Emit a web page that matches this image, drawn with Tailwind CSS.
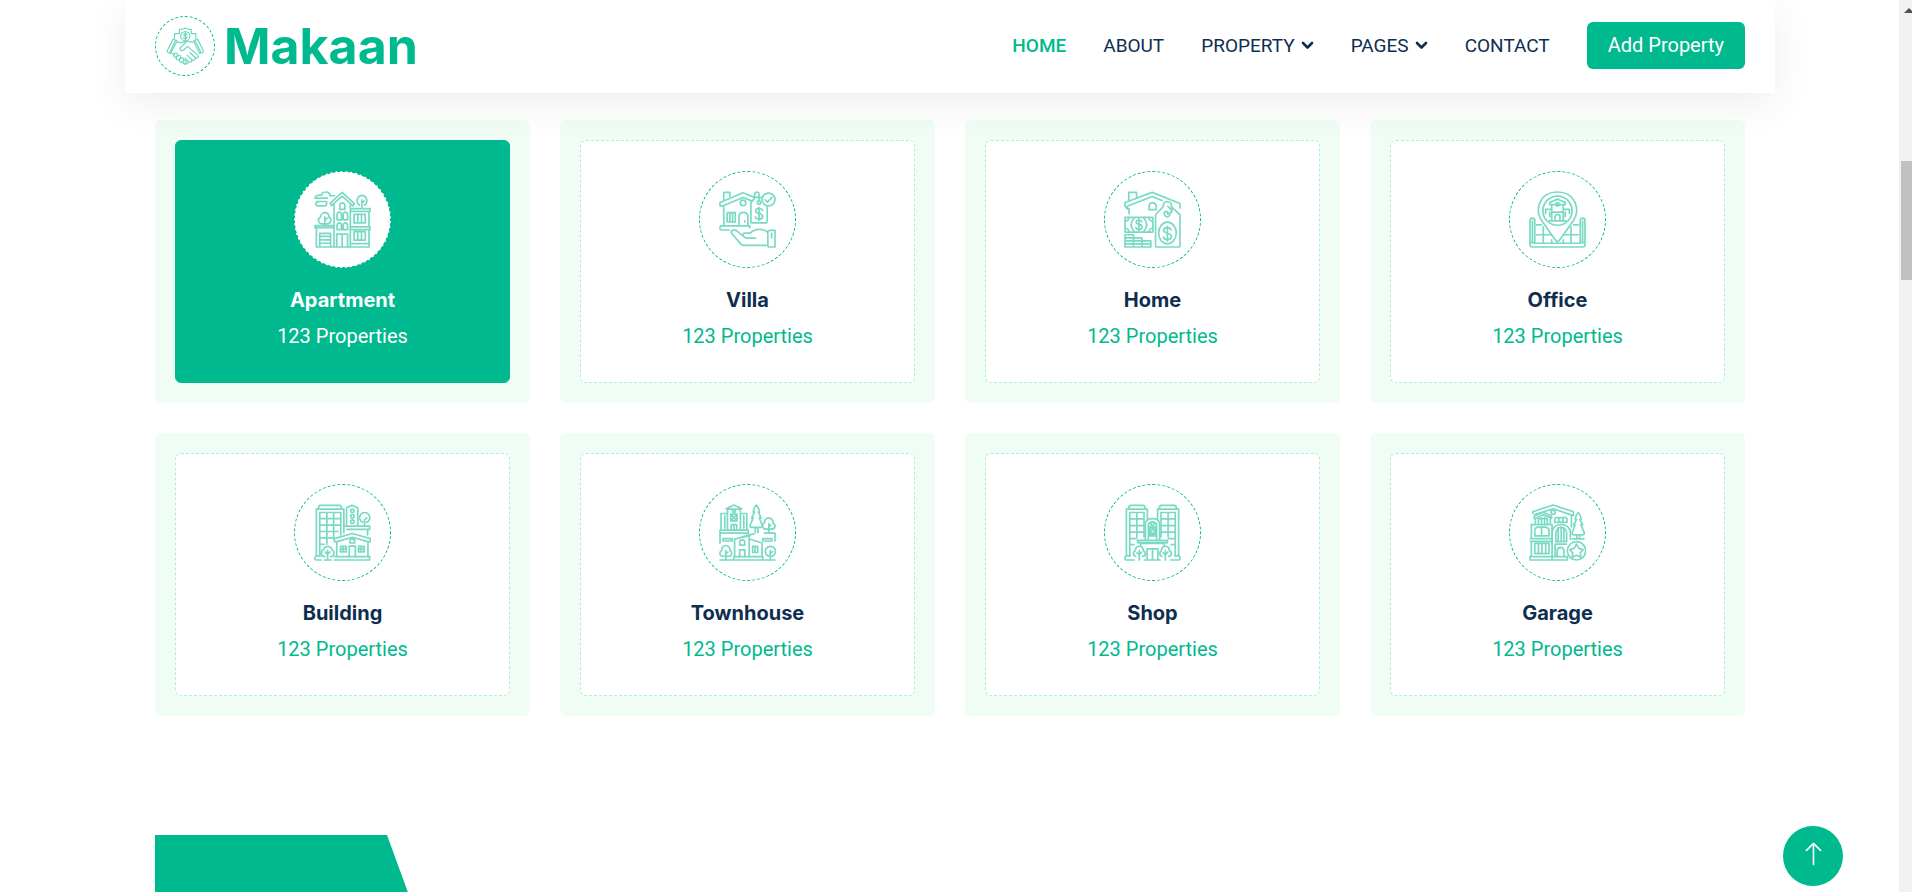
<!DOCTYPE html>
<html lang="en">
<head>
<meta charset="utf-8">
<meta name="viewport" content="width=device-width, initial-scale=1">
<title>Makaan</title>
<script src="https://cdn.jsdelivr.net/npm/@tailwindcss/browser@4"></script>
</head>
<body class="flex h-screen overflow-hidden bg-white font-['Roboto',sans-serif] text-xl text-[#0E2E50]">
<div class="h-screen min-w-0 flex-1 overflow-hidden">
  <header class="relative z-10 mx-auto flex h-[93px] max-w-[1650px] items-center justify-between bg-white px-[30px] pb-[2px] shadow-[0_10px_40px_rgba(0,0,0,0.07)]">
    <a href="#" class="flex items-center gap-[9px] text-[#00B98E]">
      <span class="flex size-[60px] items-center justify-center rounded-full border border-dashed border-[#00B98E]">
        <svg class="size-[38px]" viewBox="166 80 114 116" fill="none" stroke="#6FD6BE" stroke-width="3.6" stroke-linecap="round" stroke-linejoin="round" aria-hidden="true">
          <path d="M191 114V100H206V88C213 88 219 86 224 83C229 86 235 88 242 88V100H256V114"/>
          <circle cx="224" cy="108" r="14"/>
          <path d="M229 103C226 99 219 100 219 104C219 109 229 107 229 112C229 116 221 117 218 113M224 98V118"/>
          <path d="M187 117L169 152Q168 157 172 158L179 161L199 123ZM261 117L279 152Q280 157 275 158L268 161L249 123ZM195 120L177 156M253 120L271 156"/>
          <path d="M201 126C210 130 217 126 226 124C234 121 239 127 247 126M226 126L208 144C206 150 212 154 218 151L231 139L262 166C267 172 260 178 254 173L238 158M254 173C257 180 249 185 243 179L230 166M243 179C246 187 237 190 232 184L223 175M232 184C234 194 225 196 219 190M183 160L190 165"/>
          <path d="M189 170C185 164 194 156 199 162C203 167 193 177 189 170ZM197 179C193 172 204 162 209 168C213 174 202 185 197 179ZM207 186C203 180 213 170 218 176C222 181 212 193 207 186ZM217 191C213 187 221 178 226 183C229 188 221 196 217 191Z"/>
        </svg>
      </span>
      <span class="font-['Inter',sans-serif] text-[50px] leading-[60px] font-bold">Makaan</span>
    </a>
    <nav class="flex items-center gap-[37px] text-[19px] leading-7" aria-label="Main">
      <a href="#" class="font-medium text-[#00B98E]">HOME</a>
      <a href="#">ABOUT</a>
      <a href="#" class="flex items-center gap-[6px]">PROPERTY
        <svg class="h-[9px] w-[13px]" viewBox="0 0 13 9" fill="none" stroke="currentColor" stroke-width="2.6" stroke-linecap="round" stroke-linejoin="round" aria-hidden="true"><path d="M2 2L6.5 6.5L11 2"/></svg></a>
      <a href="#" class="flex items-center gap-[6px]">PAGES
        <svg class="h-[9px] w-[13px]" viewBox="0 0 13 9" fill="none" stroke="currentColor" stroke-width="2.6" stroke-linecap="round" stroke-linejoin="round" aria-hidden="true"><path d="M2 2L6.5 6.5L11 2"/></svg></a>
      <a href="#">CONTACT</a>
      <button type="button" class="rounded-md bg-[#00B98E] px-[21px] pt-[8px] pb-[9px] text-xl leading-[30px] text-white">Add Property</button>
    </nav>
  </header>

  <main class="mx-auto max-w-[1650px] px-[30px] pt-[27px]">
    <section class="grid grid-cols-4 gap-[30px] text-center" aria-label="Property types">
      <a href="#" class="rounded-md bg-[#EFFDF5] p-5">
        <span class="flex flex-col items-center rounded-md border border-[#00B98E] bg-[#00B98E] p-[30px] pb-[31px] text-white">
          <span class="mb-5 flex size-[97px] items-center justify-center rounded-full border border-dashed border-[#00B98E] bg-white">
            <svg class="size-[57px]" viewBox="87 93 168 168" fill="none" stroke="#79DAC4" stroke-width="5" stroke-linecap="round" stroke-linejoin="round" aria-hidden="true">
              <path d="M148 107H134C135 101 129 95 121 96C114 96 110 100 109 106C101 104 91 106 90 114H126M95 124H124M104 124C91 124 89 136 98 137H120Q126 135 124 127"/>
              <path d="M138 136L135 129L170 97L206 130L202 137L170 108ZM146 134V257M194 134V257M90 195H144V201H90ZM94 202V257M104 218H136V257M104 218V257M104 227H136M104 237H136M104 247H136M94 258H249V248H197"/>
              <path d="M163 147V136Q163 128 170 128Q178 128 178 136V147ZM155 178V164Q155 155 162 155Q168 155 168 164V178ZM173 178V164Q173 155 180 155Q186 155 186 164V178ZM155 207V195Q155 187 162 187Q168 187 168 195V207ZM173 207V195Q173 187 180 187Q186 187 186 195V207ZM154 257V220H186V257M170 220V257"/>
              <path d="M112 190C98 190 97 173 106 171C106 154 132 151 131 170C140 174 138 190 126 190H112M119 169V192M119 179L126 173"/>
              <path d="M228 106A16 16 0 0 0 221 135M228 106A16 16 0 0 1 236 135M228 120V143M228 130L235 122"/>
              <path d="M196 145H252V153H196M249 154V197M196 199H252V207H196M249 208V247M205 162H238V187H205ZM216 162V187M227 162V187M205 213H238V238H205ZM216 213V238M227 213V238"/>
            </svg>
          </span>
          <span class="mb-[9px] font-['Inter',sans-serif] leading-6 font-bold">Apartment</span>
          <span class="leading-[30px]">123 Properties</span>
        </span>
      </a>
      <a href="#" class="rounded-md bg-[#EFFDF5] p-5">
        <span class="flex flex-col items-center rounded-md border border-dashed border-[#00B98E]/30 bg-white p-[30px] pb-[31px]">
          <span class="mb-5 flex size-[97px] items-center justify-center rounded-full border border-dashed border-[#00B98E]">
            <svg class="size-[57px]" viewBox="87 93 168 168" fill="none" stroke="#79DAC4" stroke-width="5" stroke-linecap="round" stroke-linejoin="round" aria-hidden="true">
              <path d="M101 117V97H119V109M90 127L158 98L192 112V104Q193 96 199 96Q205 97 205 104V124M90 127V137H98L158 112L183 122M101 139V194M92 196H178V201M92 196Q86 207 94 208H118"/>
              <path d="M181 186V128L193 112H212M229 140V182Q229 187 224 187H186Q181 187 181 182"/>
              <circle cx="158" cy="128" r="8"/><circle cx="205" cy="127" r="5"/>
              <circle cx="233" cy="118" r="19"/><path d="M223 119L230 126L243 111"/>
              <path d="M111 157H135V184H111ZM119 157V184M127 157V184M146 195V167Q147 156 159 156Q171 156 172 167V195M163 181V184"/>
              <path d="M216 150C212 141 195 142 195 152C195 163 216 156 216 168C216 178 198 179 194 169M205 141V179"/>
              <path d="M230 215C219 203 193 202 179 217H163C157 217 155 224 161 228L168 232H195M161 228L139 210C129 204 120 211 125 219L151 249Q154 253 160 253H231M231 213Q231 209 236 209H252V258H236Q231 258 231 253ZM242 217V231"/>
            </svg>
          </span>
          <span class="mb-[9px] font-['Inter',sans-serif] leading-6 font-bold">Villa</span>
          <span class="leading-[30px] text-[#00B98E]">123 Properties</span>
        </span>
      </a>
      <a href="#" class="rounded-md bg-[#EFFDF5] p-5">
        <span class="flex flex-col items-center rounded-md border border-dashed border-[#00B98E]/30 bg-white p-[30px] pb-[31px]">
          <span class="mb-5 flex size-[97px] items-center justify-center rounded-full border border-dashed border-[#00B98E]">
            <svg class="size-[57px]" viewBox="87 93 168 168" fill="none" stroke="#79DAC4" stroke-width="5" stroke-linecap="round" stroke-linejoin="round" aria-hidden="true">
              <path d="M101 121V97H124V111M90 127L170 97L252 130V143M90 127V138L97 146V138L170 109L199 121M102 145V160"/>
              <path d="M161 148V138Q162 127 171 127Q181 128 182 138V148Z"/>
              <path d="M90 171H172V214H90ZM90 183Q100 182 102 171M90 202Q100 203 102 214M172 183Q162 182 160 171M172 202Q162 203 160 214M116 174Q100 192 116 211M146 174Q162 192 146 211"/>
              <path d="M139 184C136 176 123 177 123 185C123 194 140 189 140 199C140 208 125 209 122 201M131 175V210"/>
              <path d="M90 222H115V258H90ZM90 231H115M90 240H166V258H90M90 249H166M115 231H140V258"/>
              <path d="M203 139L180 163V253Q180 258 185 258H247Q252 258 252 253V163L230 143M203 139V133Q205 124 215 124Q227 125 227 136V155Q225 161 215 158M222 164C216 174 204 167 206 157C209 150 218 154 216 161M216 138L229 151"/>
              <ellipse cx="215" cy="217" rx="26" ry="32"/>
              <path d="M226 208C222 198 204 199 204 209C204 221 227 214 227 227C227 238 207 240 203 229M215 197V240"/>
            </svg>
          </span>
          <span class="mb-[9px] font-['Inter',sans-serif] leading-6 font-bold">Home</span>
          <span class="leading-[30px] text-[#00B98E]">123 Properties</span>
        </span>
      </a>
      <a href="#" class="rounded-md bg-[#EFFDF5] p-5">
        <span class="flex flex-col items-center rounded-md border border-dashed border-[#00B98E]/30 bg-white p-[30px] pb-[31px]">
          <span class="mb-5 flex size-[97px] items-center justify-center rounded-full border border-dashed border-[#00B98E]">
            <svg class="size-[57px]" viewBox="87 93 168 168" fill="none" stroke="#79DAC4" stroke-width="5" stroke-linecap="round" stroke-linejoin="round" aria-hidden="true">
              <path d="M171 242Q166 241 163 235L124 180C104 149 116 96 171 96C226 96 238 149 218 180L179 235Q176 241 171 242Z"/>
              <circle cx="171" cy="151" r="43"/>
              <path d="M148 133V127L171 117L194 127V133H148M154 134V181M188 134V181M146 181H196M154 147H136V159M188 147H206V159M148 155V168M194 155V168M164 181V169Q165 162 171 162Q178 163 178 169V181M154 155H188"/>
              <circle cx="171" cy="132" r="5"/>
              <path d="M104 187V179Q103 173 97 173Q90 174 90 180V251Q90 258 97 258H245Q252 258 252 251V180Q252 173 245 173Q238 174 238 180V187M97 182V245M245 182V245M104 187V245H91M238 187V245H251M104 247H238"/>
              <path d="M109 193H123M109 222H153M129 199V247M154 237V247M219 193H232M190 222H232M211 199V247M188 237V247"/>
            </svg>
          </span>
          <span class="mb-[9px] font-['Inter',sans-serif] leading-6 font-bold">Office</span>
          <span class="leading-[30px] text-[#00B98E]">123 Properties</span>
        </span>
      </a>
      <a href="#" class="rounded-md bg-[#EFFDF5] p-5">
        <span class="flex flex-col items-center rounded-md border border-dashed border-[#00B98E]/30 bg-white p-[30px] pb-[31px]">
          <span class="mb-5 flex size-[97px] items-center justify-center rounded-full border border-dashed border-[#00B98E]">
            <svg class="size-[57px]" viewBox="87 93 168 168" fill="none" stroke="#79DAC4" stroke-width="5" stroke-linecap="round" stroke-linejoin="round" aria-hidden="true">
              <path d="M100 107Q100 97 106 97H162Q168 97 169 107M94 246V108H175V178M104 246V118H166V184M125 118V212M145 118V196M104 136H166M104 155H166M104 174H158M104 193H144M104 212H116M106 246H92Q86 258 95 258H108"/>
              <path d="M183 155V104L199 97L216 104V155M175 158H251V168H184M245 169V184M236 140V157M236 140L242 134"/>
              <circle cx="200" cy="113" r="5"/><circle cx="200" cy="129" r="5"/><circle cx="200" cy="145" r="5"/>
              <path d="M231 147A15 15 0 1 1 242 147"/>
              <path d="M147 195L200 180L253 195V204H245L200 191L155 204H147ZM154 205V246M246 205V246M147 248H251V258H147M118 258H137"/>
              <path d="M193 208V202Q194 196 200 196Q207 197 207 202V208ZM165 218H182V234H165ZM173 218V234M165 226H182M218 218H235V234H218ZM226 218V234M218 226H235M191 248V217H209V248"/>
              <path d="M119 248C106 249 106 231 115 228C117 215 138 215 140 228C149 233 147 249 136 248M127 230V258M127 241L134 234M120 235L127 242"/>
            </svg>
          </span>
          <span class="mb-[9px] font-['Inter',sans-serif] leading-6 font-bold">Building</span>
          <span class="leading-[30px] text-[#00B98E]">123 Properties</span>
        </span>
      </a>
      <a href="#" class="rounded-md bg-[#EFFDF5] p-5">
        <span class="flex flex-col items-center rounded-md border border-dashed border-[#00B98E]/30 bg-white p-[30px] pb-[31px]">
          <span class="mb-5 flex size-[97px] items-center justify-center rounded-full border border-dashed border-[#00B98E]">
            <svg class="size-[57px]" viewBox="87 93 168 168" fill="none" stroke="#79DAC4" stroke-width="5" stroke-linecap="round" stroke-linejoin="round" aria-hidden="true">
              <path d="M108 107L131 96L154 107M112 108H150V167M112 108V167M93 167V121H111M151 121H169V167M90 170H173V179H90ZM90 180V208M104 127V164M160 127V164M123 167V154H139V167M131 154V167"/>
              <circle cx="131" cy="114" r="4"/><path d="M122 123H140V143H122ZM122 123L140 143M140 123L122 143"/>
              <path d="M197 96Q189 104 188 117H192L183 134H188L178 157Q178 162 184 162H210Q216 162 215 157L206 134H211L203 117H206Q205 104 197 96ZM194 163V177M202 163V177"/>
              <path d="M225 167C211 167 213 151 221 149C219 130 248 130 246 149C256 154 253 167 242 167H225M234 151V177M234 160L240 155M221 179H252V202"/>
              <path d="M99 195H126V202H99ZM216 195H243V202H216ZM133 248V197L176 184L190 181M176 188V248M176 196L214 208V248M134 196L178 186M131 248H216V258H131ZM90 258H128M219 258H252"/>
              <path d="M148 214V204Q149 199 156 199Q163 200 163 206V214ZM148 248V228H163V248M186 218H201V236H186ZM193 218V236"/>
              <path d="M97 247C87 245 88 233 95 230C93 211 121 210 119 230C127 234 126 247 116 247H97M107 230V258M107 240L113 235"/>
              <path d="M234 247A15 15 0 1 1 243 247M238 230V258M238 240L245 233"/>
            </svg>
          </span>
          <span class="mb-[9px] font-['Inter',sans-serif] leading-6 font-bold">Townhouse</span>
          <span class="leading-[30px] text-[#00B98E]">123 Properties</span>
        </span>
      </a>
      <a href="#" class="rounded-md bg-[#EFFDF5] p-5">
        <span class="flex flex-col items-center rounded-md border border-dashed border-[#00B98E]/30 bg-white p-[30px] pb-[31px]">
          <span class="mb-5 flex size-[97px] items-center justify-center rounded-full border border-dashed border-[#00B98E]">
            <svg class="size-[57px]" viewBox="87 93 168 168" fill="none" stroke="#79DAC4" stroke-width="5" stroke-linecap="round" stroke-linejoin="round" aria-hidden="true">
              <path d="M101 107Q101 97 107 97H143Q149 97 150 107M94 246V108H156V140M104 246V118H146V190M125 118V190M104 137H146M104 157H146M104 176H146M104 195H124M104 213H116M106 246H92Q86 258 95 258H117"/>
              <path d="M191 107Q191 97 197 97H235Q241 97 242 107M248 246V108H186V140M238 246V118H196V190M217 118V190M196 137H238M196 157H238M196 176H238M218 195H238M226 213H238M236 246H250Q256 258 247 258H225"/>
              <path d="M150 197V151C153 131 189 131 192 151V197M159 197V153C162 144 180 144 183 153V197"/>
              <circle cx="171" cy="151" r="5"/><path d="M163 161H179V187H163ZM163 161L179 174L163 187M179 161L163 174L179 187"/>
              <path d="M127 200H215V207H127ZM136 208V214M206 208V214M136 209H206M155 258V225H187V258M171 225V258M147 258H194"/>
              <path d="M121 247C111 244 115 232 120 231C121 213 143 213 144 231C153 235 151 247 142 247M132 230V258M132 242L139 235M125 237L132 243M198 247C190 244 192 232 197 231C198 213 220 213 221 231C230 235 228 247 219 247M209 230V258M209 242L216 235M202 237L209 243"/>
            </svg>
          </span>
          <span class="mb-[9px] font-['Inter',sans-serif] leading-6 font-bold">Shop</span>
          <span class="leading-[30px] text-[#00B98E]">123 Properties</span>
        </span>
      </a>
      <a href="#" class="rounded-md bg-[#EFFDF5] p-5">
        <span class="flex flex-col items-center rounded-md border border-dashed border-[#00B98E]/30 bg-white p-[30px] pb-[31px]">
          <span class="mb-5 flex size-[97px] items-center justify-center rounded-full border border-dashed border-[#00B98E]">
            <svg class="size-[57px]" viewBox="87 93 168 168" fill="none" stroke="#79DAC4" stroke-width="5" stroke-linecap="round" stroke-linejoin="round" aria-hidden="true">
              <path d="M98 121V116L158 96L218 116V127L211 125L158 107L104 124M102 133V129L128 117L154 129V135L128 125L103 137ZM106 137V151M150 137V151M212 128V160"/>
              <circle cx="158" cy="117" r="6"/>
              <path d="M115 151V136H141V151M124 134V151M133 134V151M163 147V137Q163 133 168 133H194Q199 133 199 137V147ZM175 133V147M187 133V147"/>
              <path d="M93 154H155M94 154V195M91 195H155V203H91M94 204V246M104 187V171Q105 161 115 161H135Q145 162 146 171V187ZM124 161V187M104 209H146V239H104ZM115 209V239M125 209V239M136 209V239M90 248H155V258H90ZM155 154V258"/>
              <path d="M155 210V176C157 146 207 146 209 176V197M166 203V179C167 156 197 156 198 179V203M173 203V163M182 160V203M190 163V203M166 204H195M164 211H198M164 211V248M158 248H200V258H158M170 248V231Q171 221 180 221Q190 222 190 231V248"/>
              <path d="M232 118Q224 126 223 138H227L219 154H223L214 178Q214 184 220 184H245Q251 184 250 178L240 154H245L237 138H241Q240 126 232 118ZM228 185V195M236 185V195M215 196H249"/>
              <circle cx="227" cy="231" r="27"/><path d="M227 211L234 224L247 227L238 237L240 250L227 244L214 250L216 237L207 227L220 224Z"/>
            </svg>
          </span>
          <span class="mb-[9px] font-['Inter',sans-serif] leading-6 font-bold">Garage</span>
          <span class="leading-[30px] text-[#00B98E]">123 Properties</span>
        </span>
      </a>
    </section>

    <section class="mt-[119px]" aria-label="About">
      <svg class="h-[200px] w-[306px]" viewBox="0 0 306 200" aria-hidden="true"><path fill="#00B98E" d="M0 0H232L305 200H0Z"/></svg>
    </section>
  </main>
</div>

<button type="button" aria-label="Back to top" class="fixed right-[69px] bottom-[6px] flex size-[60px] items-start justify-center rounded-full bg-[#00B98E] pt-[15px] text-white">
  <svg class="size-[25px]" viewBox="0 0 16 16" fill="none" stroke="currentColor" stroke-linecap="round" stroke-linejoin="round" aria-hidden="true"><path d="M8 15V1.5M3.5 6L8 1.5L12.5 6"/></svg>
</button>

<!-- Scroll track -->
<div class="relative z-20 -ml-px w-[13px] shrink-0 overflow-hidden bg-[#F1F1F1] pt-[8px] pl-[2px]" aria-hidden="true">
  <svg class="ml-[3px] h-[5px] w-[10px]" viewBox="0 0 10 5"><path fill="#505050" d="M0 5L5 0L10 5Z"/></svg>
  <div class="mt-[148px] h-[119px] bg-[#C1C1C1]"></div>
</div>
</body>
</html>
